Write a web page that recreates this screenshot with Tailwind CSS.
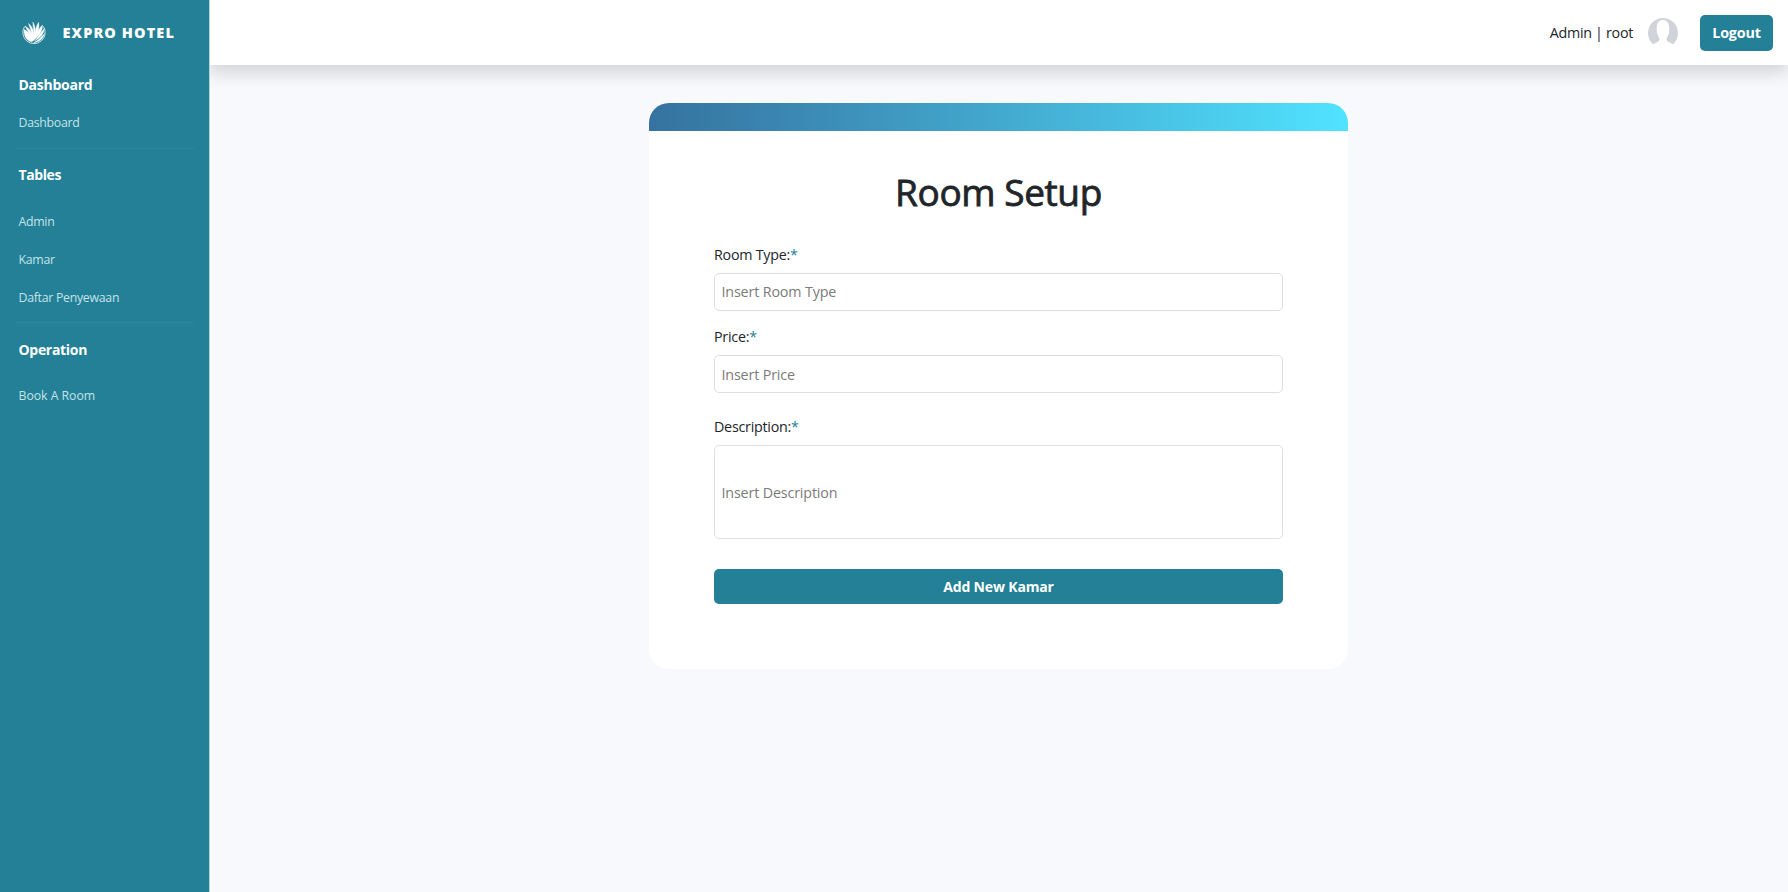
<!DOCTYPE html>
<html lang="en">
<head>
<meta charset="utf-8">
<title>Expro Hotel</title>
<script src="https://cdn.jsdelivr.net/npm/@tailwindcss/browser@4"></script>
</head>
<body class="flex h-[892px] w-[1788px] overflow-hidden bg-[#f8f9fd] font-['Open_Sans',sans-serif] text-[14.3px] tracking-[-0.15px] text-[#212529]">
<aside class="relative z-10 flex w-[209px] shrink-0 flex-col bg-[#238096] px-[18.5px] text-white shadow-[1px_0_0_#b5d5de]">
  <div class="flex h-[66px] items-center gap-[17px] pl-[3px]">
    <svg class="size-6" viewBox="0 0 24 24" fill="none">
      <path d="M2.500 5.500A11.200 11.200 0 1 0 21.500 5.500" stroke="#fff" stroke-width="1" opacity=".75"/>
      <path d="M2 8.500C4.200 9.300 6 10.800 7.500 13L3 5C6.700 6.800 9.300 10.500 10.500 14L6.500 2.500C10 5.200 11.500 9.500 12 14L10.800 1C13.300 5 13.700 9.500 13.200 14 13.300 9.500 14 5.500 16.500 1.300 17.500 6.500 16.500 10.500 14.700 14.300 15.700 10.500 17.500 7 20.500 4 20.500 9 18.700 12.500 15 16 12.500 18.800 11 20.200 9.500 20.800 4.500 19.800 1.800 15 2 8.500Z" fill="#fff" stroke="#fff" stroke-width=".4"/>
      <path d="M22.300 7.500C21.800 13.500 18 17 12.500 20 15.500 16.500 18 12.500 22.300 7.500ZM22.500 12.500C21 18 17.500 21.200 11.500 21.700 16 19.700 19 16.500 22.500 12.500Z" fill="#fff" stroke="#fff" stroke-width=".3"/>
    </svg>
    <span class="text-[14.5px] font-extrabold tracking-[1.1px]">EXPRO HOTEL</span>
  </div>
  <h2 class="mt-[9px] text-[14px] leading-5 font-bold tracking-[-0.25px]">Dashboard</h2>
  <a class="mt-[18px] text-[12.3px] leading-5 tracking-[-0.27px] text-[#c5e3ea]">Dashboard</a>
  <hr class="mt-[15px] -ml-[3px] w-[178px] border-[#2b879c]">
  <h2 class="mt-[16px] text-[14px] leading-5 font-bold tracking-[-0.4px]">Tables</h2>
  <nav class="mt-[26.500px] flex flex-col gap-[18.4px] text-[12.3px] leading-5 tracking-[-0.27px] text-[#c5e3ea]">
    <a>Admin</a><a>Kamar</a><a>Daftar Penyewaan</a>
  </nav>
  <hr class="mt-[13.500px] -ml-[3px] w-[178px] border-[#2b879c]">
  <h2 class="mt-[17px] text-[14px] leading-5 font-bold tracking-[-0.3px]">Operation</h2>
  <a class="mt-[26px] text-[12.3px] leading-5 tracking-[-0.05px] text-[#c5e3ea]">Book A Room</a>
</aside>
<div class="flex grow flex-col">
  <header class="flex h-[65px] shrink-0 items-center justify-end bg-white pr-[15px] shadow-[0_8px_16px_rgba(0,0,0,0.15)]">
    <span class="mr-[15px] tracking-[-0.3px]">Admin | root</span>
    <svg class="mr-[22px] size-[30px]" viewBox="0 0 30 30"><path d="M5 26.200A15 15 0 1 1 25 26.200L20.500 24C18.500 23 18.500 21.500 18.800 19.500 20.500 18 21.500 14 21.300 10 21.200 5 19 2 15 2S8.800 5 8.700 10C8.500 14 9.500 18 11.200 19.500 11.500 21.500 11.500 23 9.500 24Z" fill="#d0d3d9"/></svg>
    <button class="h-[36px] w-[73px] rounded-[5px] bg-[#238096] font-bold text-white">Logout</button>
  </header>
  <main class="flex justify-center pt-[38px]">
    <section class="h-[566px] w-[699px] overflow-hidden rounded-[20px] bg-white">
      <div class="h-[28px] bg-linear-to-r from-[#35729f] to-[#50e3ff]"></div>
      <form class="flex flex-col px-[65px] pt-[36px]">
        <h1 class="text-center text-[37px] leading-[50px] tracking-[-0.4px] [-webkit-text-stroke:0.8px_#212529]">Room Setup</h1>
        <label class="mt-[26px] leading-6 tracking-[-0.25px]">Room Type:<span class="text-[#238096]">*</span></label>
        <div class="mt-[6px] flex h-[38px] items-center rounded-[5px] border border-[#dfdfe1] px-[6.500px] text-[#7b7b7b]">Insert Room Type</div>
        <label class="mt-[14px] leading-6 tracking-[-0.25px]">Price:<span class="text-[#238096]">*</span></label>
        <div class="mt-[6px] flex h-[38px] items-center rounded-[5px] border border-[#dfdfe1] px-[6.500px] pt-px text-[#7b7b7b]">Insert Price</div>
        <label class="mt-[22px] leading-6 tracking-[-0.25px]">Description:<span class="text-[#238096]">*</span></label>
        <div class="mt-[6px] flex h-[94px] items-center rounded-[5px] border border-[#dfdfe1] px-[6.500px] pt-[2px] text-[#7b7b7b]">Insert Description</div>
        <button class="mt-[30px] h-[35px] rounded-[5px] bg-[#238096] text-[14px] font-bold text-white">Add New Kamar</button>
      </form>
    </section>
  </main>
</div>
</body>
</html>
